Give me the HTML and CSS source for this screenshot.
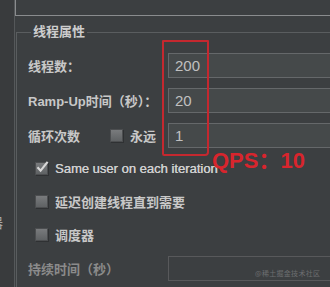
FILE: index.html
```html
<!DOCTYPE html>
<html lang="zh-CN">
<head>
  <meta charset="UTF-8">
  <title>线程属性</title>
  <link rel="stylesheet" href="styles.css">
</head>
<body>
  <div class="app">
    <div class="side"><span class="side-txt">器</span></div>
    <div class="main">
      <div class="top-panel"></div>
      <fieldset class="group">
        <legend>线程属性</legend>
        <div class="form-row">
          <label class="lbl">线程数：</label>
          <div class="field">200</div>
        </div>
        <div class="form-row">
          <label class="lbl">Ramp-Up时间（秒）：</label>
          <div class="field">20</div>
        </div>
        <div class="form-row">
          <div class="lbl loop">
            <span>循环次数</span>
            <span class="check"></span>
            <span>永远</span>
          </div>
          <div class="field">1</div>
        </div>

        <div class="checks">
          <div class="check-row">
            <span class="check checked">
              <svg width="14" height="14" viewBox="0 0 14 14"><path d="M2.5 7.2 L5.6 10.6 L12.6 1.8" fill="none" stroke="#d8d8d8" stroke-width="2.1"/></svg>
            </span>
            <span class="latin">Same user on each iteration</span>
          </div>
          <div class="check-row">
            <span class="check"></span>
            <span>延迟创建线程直到需要</span>
          </div>
          <div class="check-row">
            <span class="check"></span>
            <span>调度器</span>
          </div>
        </div>

        <div class="form-row last">
          <label class="lbl dim">持续时间（秒）</label>
          <div class="field off"></div>
        </div>
      </fieldset>
    </div>

    <div class="mark-box"></div>
    <div class="qps">QPS：10</div>
    <div class="watermark">@稀土掘金技术社区</div>
  </div>
</body>
</html>
```

FILE: styles.css
```css
* {
  margin: 0;
  padding: 0;
  box-sizing: border-box;
}
body {
  background: #3c3f41;
  font-family: 'Liberation Sans', 'Noto Sans CJK SC', sans-serif;
  font-size: 13px;
  color: #c6c6c6;
  overflow: hidden;
}
.app {
  position: relative;
  display: flex;
  width: 330px;
  height: 287px;
  overflow: hidden;
}
.side {
  width: 15px;
  flex: none;
  background: #393b3d;
  border-right: 1px solid #55585a;
  overflow: hidden;
  padding-top: 212px;
}
.side-txt {
  display: block;
  margin-left: -11px;
  font-size: 14px;
  color: #a8a8a8;
}
.main {
  flex: none;
  width: 420px;
}
.top-panel {
  height: 16px;
  border-left: 1px solid #8a8c8e;
  border-bottom: 1px solid #8a8c8e;
}
.group {
  margin: 8px 0 0 1px;
  padding: 13px 0 0 11px;
  border: 1px solid #5a5d5f;
  border-bottom: none;
  height: 300px;
}
.group legend {
  margin-left: 3px;
  padding: 0 2px;
  line-height: 16px;
  font-size: 13px;
  font-weight: bold;
  color: #cdcdcd;
}
.form-row {
  display: grid;
  grid-template-columns: 140px 1fr;
  align-items: center;
  height: 25px;
  margin-bottom: 10px;
}
.lbl {
  font-weight: bold;
  color: #c8c8c8;
}
.lbl.dim {
  color: #8b8b8b;
}
.loop {
  display: flex;
  align-items: center;
}
.loop .check {
  margin: 0 7px 0 30px;
}
.field {
  height: 25px;
  background: #45494a;
  border: 1px solid #65686a;
  padding: 0 6px;
  line-height: 23px;
  font-size: 15px;
  color: #c0c0c0;
}
.field.off {
  background: transparent;
  border-color: #58595b;
}
.checks {
  display: flex;
  flex-direction: column;
  gap: 13px;
  margin: 1px 0 12px 7px;
}
.check-row {
  display: flex;
  align-items: center;
  height: 20px;
  gap: 7px;
  font-weight: bold;
  color: #c8c8c8;
}
.check-row .latin {
  font-weight: normal;
  color: #cfcfcf;
  text-shadow: 0.3px 0 0 #cfcfcf;
}
.check {
  position: relative;
  display: inline-block;
  width: 13px;
  height: 13px;
  flex: none;
  background: linear-gradient(180deg, #797b7d, #5f6264);
  border: 1px solid #4c4e50;
  box-shadow: 1px 1px 0 #2f3133;
}
.check svg {
  position: absolute;
  left: -1px;
  top: -3px;
}
.mark-box {
  position: absolute;
  left: 162px;
  top: 40px;
  width: 47px;
  height: 116px;
  border: 2px solid #c4282f;
  border-radius: 1px 1px 4px 2px;
}
.qps {
  position: absolute;
  left: 212px;
  top: 142px;
  white-space: nowrap;
  font-family: 'Liberation Sans', 'Noto Sans CJK SC', sans-serif;
  font-size: 22px;
  font-weight: bold;
  color: #d8252d;
}
.watermark {
  position: absolute;
  left: 255px;
  top: 268px;
  white-space: nowrap;
  font-family: 'Noto Sans CJK SC', sans-serif;
  font-size: 7px;
  letter-spacing: 0.3px;
  color: #6c6e70;
}
```
